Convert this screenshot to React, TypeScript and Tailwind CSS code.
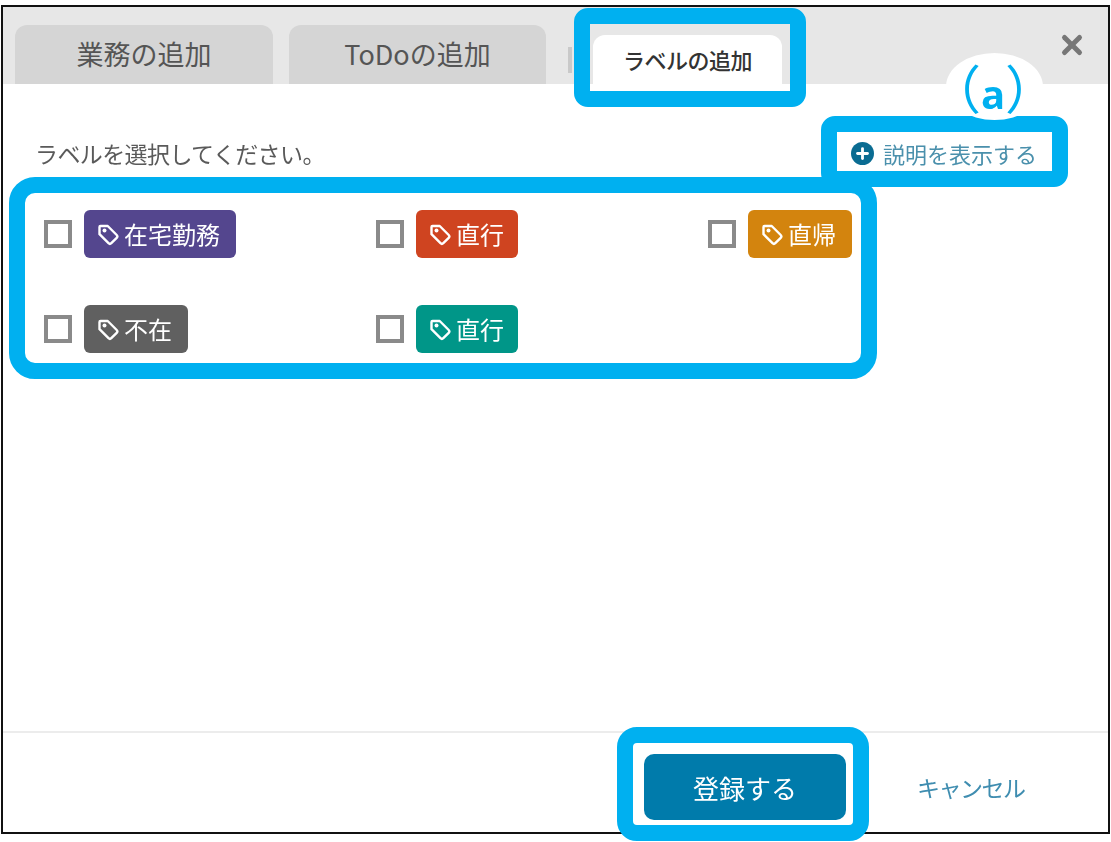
import { Plus, X } from "lucide-react";

const font = "font-['Noto_Sans_CJK_JP','Noto_Sans',sans-serif]";

function TagIcon() {
  return (
    <svg viewBox="0 0 24 24" className="size-[24px] shrink-0" fill="none" stroke="currentColor" strokeWidth={2.4} strokeLinejoin="round">
      <path d="M4.5 4h7.2l9 9a2 2 0 0 1 0 2.8l-5.4 5.4a2 2 0 0 1-2.8 0l-9-9V5a1 1 0 0 1 1-1z" />
      <circle cx="8.5" cy="8.5" r="2" fill="currentColor" stroke="none" />
    </svg>
  );
}

function LabelOption({ name, color, width }: { name: string; color: string; width: string }) {
  return (
    <div className="flex items-center gap-[12px]">
      <div className="size-[28px] border-[4px] border-[#8a8a8a] bg-white" />
      <div className={`flex h-[48px] items-center gap-[4px] rounded-[6px] pl-[12px] text-[24px] leading-none text-white ${color} ${width}`}>
        <TagIcon />
        <span>{name}</span>
      </div>
    </div>
  );
}

export default function App() {
  return (
    <div className={`relative h-[842px] w-[1111px] overflow-hidden bg-white ${font}`}>
      <div className="ml-px mt-[5px] h-[829px] w-[1109px] border-2 border-[#111]">
        <div className="flex h-full flex-col blur-[0.6px]">
          <div className="flex h-[77px] shrink-0 items-end bg-[#e7e7e7] pl-[12px]">
            <div className="flex h-[59px] w-[258px] items-center justify-center rounded-t-[12px] bg-[#d5d5d5] text-[27px] text-[#555]">
              業務の追加
            </div>
            <div className="ml-[16px] flex h-[59px] w-[257px] items-center justify-center rounded-t-[12px] bg-[#d5d5d5] text-[27px] text-[#555]">
              ToDoの追加
            </div>
            <div className="mb-[11px] ml-[22px] h-[26px] w-[4px] bg-[#c9c9c9]" />
            <div className="ml-[21px] flex h-[49px] w-[189px] items-center justify-center rounded-t-[12px] bg-white text-[22px] font-medium tracking-[-0.5px] text-[#333]">
              ラベルの追加
            </div>
            <X className="mb-[24px] ml-[275px] size-[30px] text-[#777]" strokeWidth={4} />
          </div>

          <div className="flex-1 pt-[49px]">
            <div className="flex h-[40px] items-center justify-between pl-[32px] pr-[71px]">
              <span className="text-[23px] tracking-[-0.6px] text-[#5a5a5a]">ラベルを選択してください。</span>
              <div className="flex items-center gap-[9px] text-[22px] text-[#4a90ac]">
                <span className="flex size-[23px] items-center justify-center rounded-full bg-[#0a6c92]">
                  <Plus className="size-[17px] text-white" strokeWidth={4} />
                </span>
                説明を表示する
              </div>
            </div>
            <div className="ml-[41px] mt-[37px] grid grid-cols-[332px_332px_auto] gap-y-[47px]">
              <LabelOption name="在宅勤務" color="bg-[#54468e]" width="w-[152px]" />
              <LabelOption name="直行" color="bg-[#cf4420]" width="w-[102px]" />
              <LabelOption name="直帰" color="bg-[#d3840e]" width="w-[104px]" />
              <LabelOption name="不在" color="bg-[#606060]" width="w-[104px]" />
              <LabelOption name="直行" color="bg-[#009688]" width="w-[102px]" />
            </div>
          </div>

          <div className="flex h-[101px] shrink-0 items-start justify-end gap-[71px] border-t-2 border-[#ececec] pr-[84px] pt-[21px]">
            <div className="flex h-[66px] w-[202px] items-center justify-center rounded-[10px] bg-[#007bab] text-[26px] text-white">
              登録する
            </div>
            <div className="flex h-[66px] w-[107px] items-center whitespace-nowrap text-[23px] tracking-[-1.5px] text-[#3f8db0]">
              キャンセル
            </div>
          </div>
        </div>
      </div>

      {/* callout highlights */}
      <div className="absolute left-[574px] top-[8px] h-[99px] w-[232px] rounded-[14px] border-[16px] border-[#00b0f0]" />
      <div className="absolute left-[821px] top-[116px] h-[71px] w-[247px] rounded-[14px] border-[16px] border-[#00b0f0]" />
      <div className="absolute left-[9px] top-[177px] h-[202px] w-[868px] rounded-[26px] border-[16px] border-[#00b0f0]" />
      <div className="absolute left-[617px] top-[727px] h-[114px] w-[252px] rounded-[20px] border-[16px] border-[#00b0f0]" />
      <div className="absolute left-[946px] top-[53px] flex h-[67px] w-[97px] items-center justify-center rounded-[50%] bg-white pr-[3px] text-[52px] leading-none text-[#00b0f0]">
        <span className="shrink-0">（</span>
        <span className="shrink-0 pt-[14px] font-['Open_Sans',sans-serif] text-[40px] font-bold">a</span>
        <span className="shrink-0">）</span>
      </div>
    </div>
  );
}
